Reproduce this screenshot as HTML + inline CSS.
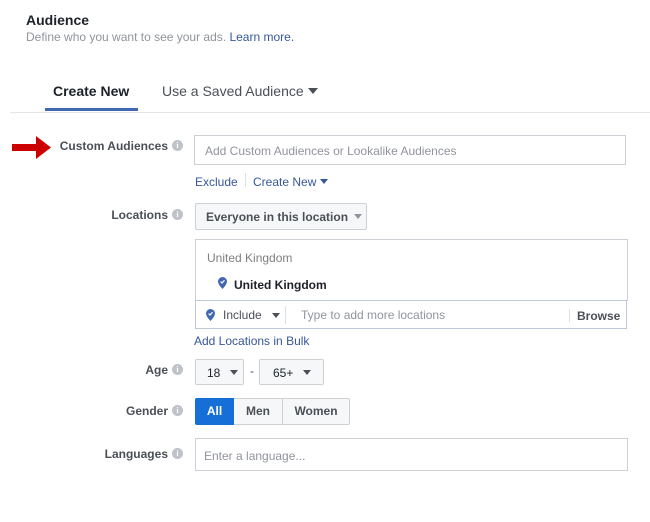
<!DOCTYPE html><html><head><style>
body{margin:0;width:650px;height:522px;background:#fff;font-family:"Liberation Sans",Arial,sans-serif;position:relative;overflow:hidden}
.a{position:absolute;white-space:nowrap}
.lbl{position:absolute;right:482px;font-size:12px;font-weight:bold;color:#4b4f56;white-space:nowrap}
.i{display:inline-block;width:11px;height:11px;border-radius:50%;background:#bec2c9;color:#fff;font-size:8px;line-height:11px;text-align:center;font-weight:bold;margin-left:4px;vertical-align:0px;font-family:"Liberation Serif",serif}
.lbl .i{position:absolute;right:-15px;top:1px}
.box{position:absolute;border:1px solid #ccd0d5;box-sizing:border-box}
.btn{position:absolute;border:1px solid #ced0d4;background:#f6f7f9;box-sizing:border-box;font-size:12px;font-weight:bold;color:#4b4f56;border-radius:2px}
.tri{display:inline-block;width:0;height:0;border-left:4.5px solid transparent;border-right:4.5px solid transparent;border-top:5px solid #4b4f56;vertical-align:2px}
.ph{color:#90949c;font-size:12px}
.link{color:#365899;font-size:12px}
</style></head><body>
<div class="a" style="left:26px;top:12px;font-size:14px;font-weight:bold;color:#1d2129">Audience</div>
<div class="a" style="left:26px;top:30px;font-size:12px;color:#90949c">Define who you want to see your ads. <span style="color:#365899">Learn more.</span></div>
<div class="a" style="left:53px;top:83px;font-size:14px;font-weight:bold;color:#1d2129">Create New</div>
<div class="a" style="left:45px;top:108px;width:93px;height:3px;background:#4267b2"></div>
<div class="a" style="left:162px;top:83px;font-size:14px;color:#4b4f56">Use a Saved Audience <span class="tri" style="border-left-width:5px;border-right-width:5px;border-top-width:6px"></span></div>
<div class="a" style="left:10px;top:112px;width:640px;height:1px;background:#e5e5e5"></div>
<svg class="a" style="left:12px;top:135px" width="40" height="25"><polygon points="0,9 24,9 24,1 39,12.5 24,24 24,16 0,16" fill="#c00"/></svg>
<div class="lbl" style="top:139px">Custom Audiences<span class="i">i</span></div>
<div class="box" style="left:194px;top:135px;width:432px;height:30px"><span class="ph" style="position:absolute;left:10px;top:8px">Add Custom Audiences or Lookalike Audiences</span></div>
<div class="a link" style="left:195px;top:175px">Exclude</div>
<div class="a" style="left:245px;top:173px;width:1px;height:14px;background:#dddfe2"></div>
<div class="a link" style="left:253px;top:175px">Create New <span class="tri" style="border-top-color:#365899"></span></div>
<div class="lbl" style="top:208px">Locations<span class="i">i</span></div>
<div class="btn" style="left:195px;top:203px;width:172px;height:27px;padding:6px 0 0 10px">Everyone in this location <span class="tri" style="border-top-color:#90949c;margin-left:3px"></span></div>
<div class="box" style="left:195px;top:239px;width:433px;height:62px;border-bottom:none">
<span class="ph" style="position:absolute;left:11px;top:11px;color:#7f7f7f">United Kingdom</span>
<svg style="position:absolute;left:22px;top:37px" width="9" height="12" viewBox="0 0 9 12"><path d="M4.5 0A4.5 4.5 0 0 0 0 4.5C0 7.5 4.5 12 4.5 12S9 7.5 9 4.5A4.5 4.5 0 0 0 4.5 0Z" fill="#4267b2"/><path d="M2.6 4.6 4 6 6.5 3.3" stroke="#fff" stroke-width="1.2" fill="none"/></svg>
<span style="position:absolute;left:38px;top:38px;font-size:12px;font-weight:bold;color:#1d2129">United Kingdom</span></div>
<div class="box" style="left:195px;top:300px;width:432px;height:29px;border-color:#bdc7d8">
<svg style="position:absolute;left:10px;top:8px" width="9" height="12" viewBox="0 0 9 12"><path d="M4.5 0A4.5 4.5 0 0 0 0 4.5C0 7.5 4.5 12 4.5 12S9 7.5 9 4.5A4.5 4.5 0 0 0 4.5 0Z" fill="#4267b2"/><path d="M2.6 4.6 4 6 6.5 3.3" stroke="#fff" stroke-width="1.2" fill="none"/></svg>
<span style="position:absolute;left:27px;top:7px;font-size:12px;color:#4b4f56">Include</span>
<span class="tri" style="position:absolute;left:76px;top:12px"></span>
<span style="position:absolute;left:89px;top:5px;width:1px;height:18px;background:#dddfe2"></span>
<span class="ph" style="position:absolute;left:105px;top:7px">Type to add more locations</span>
<span style="position:absolute;left:373px;top:8px;width:1px;height:13px;background:#dddfe2"></span>
<span style="position:absolute;left:381px;top:8px;font-size:12px;font-weight:bold;color:#4b4f56">Browse</span></div>
<div class="a link" style="left:194px;top:334px">Add Locations in Bulk</div>
<div class="lbl" style="top:363px">Age<span class="i">i</span></div>
<div class="btn" style="left:195px;top:359px;width:49px;height:26px;padding:6px 0 0 11px;font-weight:normal;color:#1d2129">18 <span class="tri" style="margin-left:6px"></span></div>
<div class="a" style="left:250px;top:364px;font-size:12px;color:#4b4f56">-</div>
<div class="btn" style="left:259px;top:359px;width:65px;height:26px;padding:6px 0 0 13px;font-weight:normal;color:#1d2129">65+ <span class="tri" style="margin-left:6px"></span></div>
<div class="lbl" style="top:404px">Gender<span class="i">i</span></div>
<div class="btn" style="left:195px;top:398px;width:155px;height:27px"></div>
<div class="a" style="left:195px;top:398px;width:39px;height:27px;background:#166fd6;border-radius:2px 0 0 2px;color:#fff;font-size:12px;font-weight:bold;text-align:center;line-height:27px">All</div>
<div class="a" style="left:234px;top:399px;width:48px;height:25px;border-right:1px solid #ced0d4;font-size:12px;font-weight:bold;color:#4b4f56;text-align:center;line-height:25px">Men</div>
<div class="a" style="left:283px;top:399px;width:66px;height:25px;font-size:12px;font-weight:bold;color:#4b4f56;text-align:center;line-height:25px">Women</div>
<div class="lbl" style="top:447px">Languages<span class="i">i</span></div>
<div class="box" style="left:195px;top:438px;width:433px;height:33px"><span class="ph" style="position:absolute;left:8px;top:10px">Enter a language...</span></div>
</body></html>
